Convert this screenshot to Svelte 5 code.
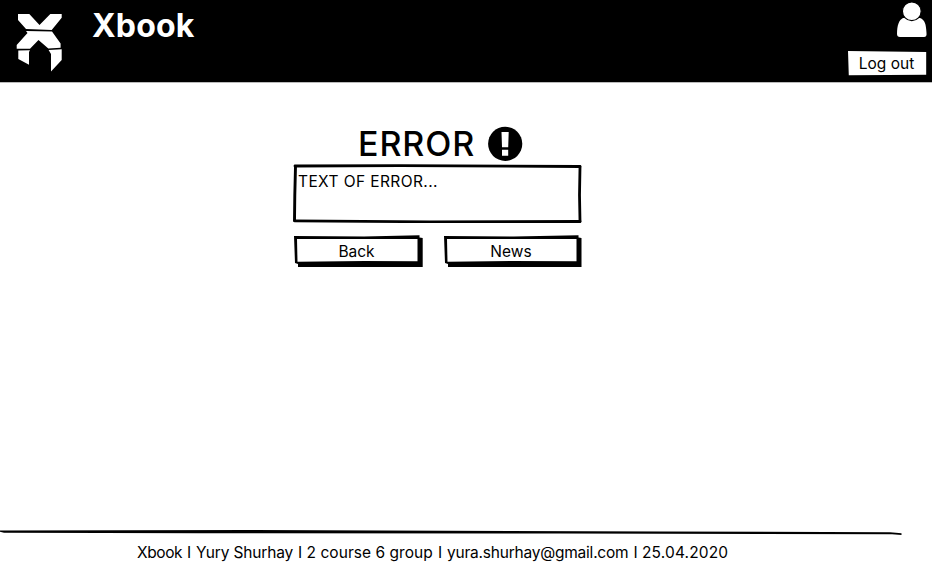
<script>
  const footer = [
    ['Xbook', 50, -0.4],
    ['I', 9, 0],
    ['Yury Shurhay', 102, -0.15],
    ['I', 8.5, 0],
    ['2 course 6 group', 131.5, 0.05],
    ['I', 9, 0],
    ['yura.shurhay@gmail.com', 186.5, -0.22],
    ['I', 8.5, 0],
    ['25.04.2020', 88, 0.15]
  ];
</script>

<div class="page">
  <header>
    <div class="brand">
      <svg class="logo" width="46" height="60" viewBox="16 13 46 60" fill="#fff">
        <path d="M18 14H29.300L39.500 25L50.300 14H61.700V17.800L51.700 30L26 29L18 20Z" />
        <path d="M26 31L52 31.500L60.600 43.500V47.800L48.300 48.500L38.500 40L30 48.700H16.700V45L27.500 33Z" />
        <path d="M18.300 50.500L30 50.200L29 52V64.700L18.300 59Z" />
        <path d="M48.600 50L61.700 49.300V60L51 71.500V54Z" />
      </svg>
      <h1>Xbook</h1>
    </div>
    <div class="account">
      <svg width="32" height="38" viewBox="896 1 32 38" fill="#fff">
        <path d="M903 18C899 20 897 25 897 34Q897 37 900 37H924Q927 37 926.500 33C926 24 925 20 920 18Z" />
        <circle cx="911.800" cy="11.300" r="9.400" stroke="#000" stroke-width="1.200" />
      </svg>
      <button class="logout"><span>Log out</span></button>
    </div>
  </header>

  <main>
    <div class="title">
      <h2>ERROR</h2>
      <svg width="36" height="36" viewBox="487 126 36 36">
        <circle cx="505.200" cy="143.800" r="17.100" />
        <path d="M501.500 132H508.700L508.200 147.300H502ZM502 149.700H508.200V155.700H502Z" fill="#fff" />
      </svg>
    </div>
    <div class="message">
      <svg class="outline" width="290" height="60" viewBox="292 163 290 60" fill="none" stroke="#000" stroke-linejoin="round" stroke-linecap="round">
        <path d="M295 166L400 165.700L580 166.500" stroke-width="2.800" />
        <path d="M580 167L579.500 195L580 221.500" stroke-width="2.800" />
        <path d="M580 221.500L430 221.800L294.500 220.800" stroke-width="2.800" />
        <path d="M294.500 220.500L294.800 195L295.500 166.500" stroke-width="2.900" />
      </svg>
      <p>TEXT OF ERROR...</p>
    </div>
    <div class="actions">
      <button class="back">
        <svg class="outline" width="129" height="32" viewBox="0 0 129 32">
          <path d="M0 1L70 1.500L125.500 .3V2.500L128.700 3V32H4V29L1 28Z" />
          <path d="M3 4L123.500 4V26.300L70 26L3.500 26.700Z" fill="#fff" />
        </svg>
        <span>Back</span>
      </button>
      <button class="news">
        <svg class="outline" width="138" height="32" viewBox="0 0 138 32">
          <path d="M0 1L70 1.500L134.500 .3V2.500L137.500 3V32H4V29L1 28Z" />
          <path d="M3 4L132.500 4V26.300L70 26L3.500 26.700Z" fill="#fff" />
        </svg>
        <span>News</span>
      </button>
    </div>
  </main>

  <footer>
    <svg width="903" height="7" viewBox="0 529 903 7">
      <path d="M0 530.500L250 530L660 531.500L890 532.300L901.500 533.300V535L892 534.300L560 533.600L200 533.200L4 532.700L0 531.700Z" />
    </svg>
    <p>
      {#each footer as [text, width, spacing]}
        <span style="width: {width}px; letter-spacing: {spacing}px">{text}</span>
      {/each}
    </p>
  </footer>
</div>

<style>
  :global(body) { background: #fff; }
  .page {
    width: 932px; height: 588px; display: flex; flex-direction: column; overflow: hidden;
    font: 16px/20px Inter, "Liberation Sans", sans-serif; color: #000;
  }
  h1, h2, p { margin: 0; font-weight: 400; }
  svg { display: block; flex: none; }
  header {
    height: 82px; box-sizing: border-box; background: #000; color: #fff;
    display: flex; justify-content: space-between; flex: none;
    box-shadow: 0 .5px 0 #777;
  }
  .brand { display: flex; padding: 13px 0 0 16px; gap: 30px; }
  h1 { font-size: 32px; line-height: 26px; font-weight: 700; letter-spacing: .2px; }
  .account { display: flex; flex-direction: column; align-items: flex-end; padding: 1px 5px 0 0; }
  .account > svg { margin-right: -1px; }
  button { border: 0; padding: 0; background: none; font: inherit; color: inherit; position: relative; }
  .logout {
    width: 79px; height: 25px; margin-top: 12px; background: #fff; color: #000;
    clip-path: polygon(0 0, 99% 4%, 99% 95%, 1% 97%);
  }
  .logout span { font-size: 15.5px; padding-right: 2px; }
  main { flex: 1; padding: 44px 0 0 292px; }
  .title { display: flex; align-items: center; padding-left: 66px; height: 36px; gap: 11px; }
  h2 { width: 118px; font-size: 34px; line-height: 36px; white-space: nowrap; font-weight: 500; letter-spacing: .9px; }
  .message { position: relative; width: 290px; height: 60px; margin-top: 1px; }
  .outline { position: absolute; inset: 0; }
  .message p { position: relative; padding: 9px 0 0 6px; font-size: 15.5px; letter-spacing: .4px; }
  .actions { display: flex; gap: 21px; padding: 12px 0 0 2px; }
  .actions button { height: 32px; }
  .back { width: 129px; }
  .news { width: 138px; }
  .actions span { position: relative; font-size: 15.5px; padding-right: 4px; }
  footer { height: 59px; flex: none; }
  footer p { display: flex; padding: 7px 0 0 137px; font-size: 15.5px; }
  footer span { white-space: nowrap; flex: none; }
</style>
